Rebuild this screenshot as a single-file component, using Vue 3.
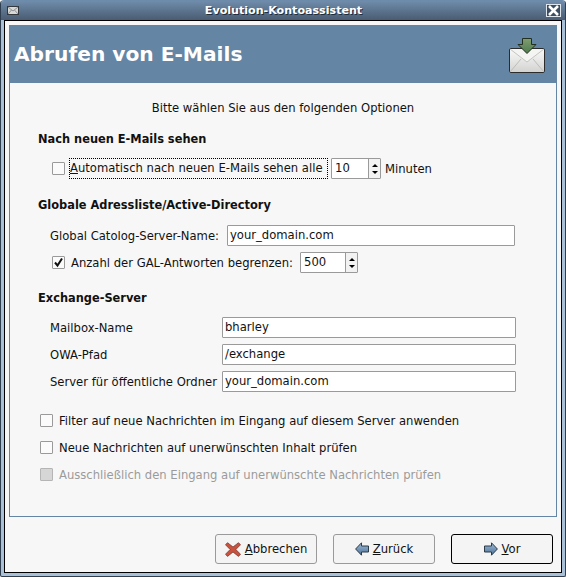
<template>
  <div class="window">
    <!-- Titelleiste -->
    <div class="titlebar">
      <svg class="tb-icon" width="12" height="9" viewBox="0 0 12 9">
        <rect x="0.5" y="0.5" width="11" height="8" fill="#d8d8d4" stroke="#33383e"/>
        <path d="M1 1l5 4 5-4M1 8l3.500-4M11 8L7.500 4" fill="none" stroke="#8d9296"/>
      </svg>
      <span class="tb-title">Evolution-Kontoassistent</span>
      <div class="tb-close">
        <svg width="13" height="11" viewBox="0 0 13 11">
          <path d="M2 1l9 9M11 1l-9 9" stroke="#fff" stroke-width="2.600" fill="none"/>
        </svg>
      </div>
    </div>

    <div class="client">
      <div class="page">
        <div class="banner">
          <h1>Abrufen von E-Mails</h1>
          <svg class="banner-icon" width="38" height="37" viewBox="0 0 38 37">
            <defs>
              <linearGradient id="env" x1="0" y1="0" x2="0" y2="1">
                <stop offset="0" stop-color="#fafafa"/>
                <stop offset="1" stop-color="#d2d2d0"/>
              </linearGradient>
              <linearGradient id="arrow" x1="0" y1="0" x2="0" y2="1">
                <stop offset="0" stop-color="#7f9e72"/>
                <stop offset="1" stop-color="#4f7a4c"/>
              </linearGradient>
            </defs>
            <rect x="1.500" y="11.500" width="35" height="24" rx="1.500" fill="url(#env)" stroke="#2c2c2c"/>
            <path d="M2 12l17 13 17-13" fill="#f4f4f2" stroke="#c4c4c0"/>
            <path d="M2 35l11-13M36 35L25 22" fill="none" stroke="#bdbdb9"/>
            <path d="M14.500 1.500h9v6h4.500L19 16.500 10 7.500h4.500z" fill="url(#arrow)" stroke="#24301f"/>
          </svg>
        </div>

        <div class="body">
          <p class="intro">Bitte wählen Sie aus den folgenden Optionen</p>

          <section class="group first">
            <h2>Nach neuen E-Mails sehen</h2>
            <div class="auto-row">
              <span class="check"></span>
              <span class="focus-label"><u>A</u>utomatisch nach neuen E-Mails sehen alle</span>
              <div class="spin spin-minutes">
                <span class="spin-value">10</span>
                <div class="spin-btns"><i class="up"></i><i class="down"></i></div>
              </div>
              <span>Minuten</span>
            </div>
          </section>

          <section class="group">
            <h2>Globale Adressliste/Active-Directory</h2>
            <div class="gal-row">
              <span>Global Catolog-Server-Name:</span>
              <div class="entry gal-entry">your_domain.com</div>
            </div>
            <div class="gal-limit">
              <span class="check">
                <svg width="11" height="11" viewBox="0 0 11 11">
                  <path d="M2 5.500l2.500 3L9 1.500" fill="none" stroke="#111" stroke-width="2"/>
                </svg>
              </span>
              <span class="gal-text">Anzahl der GAL-Antworten begrenzen:</span>
              <div class="spin spin-gal">
                <span class="spin-value">500</span>
                <div class="spin-btns"><i class="up"></i><i class="down"></i></div>
              </div>
            </div>
          </section>

          <section class="group third">
            <h2>Exchange-Server</h2>
            <div class="ex-grid">
              <template v-for="f in exchange" :key="f.label">
                <span>{{ f.label }}</span>
                <div class="entry">{{ f.value }}</div>
              </template>
            </div>
          </section>

          <div class="options">
            <div v-for="o in options" :key="o.text" class="opt" :class="{ off: o.off }">
              <span class="check"></span>
              <span>{{ o.text }}</span>
            </div>
          </div>
        </div>
      </div>

      <!-- Buttons -->
      <div class="actions">
        <button class="btn">
          <svg width="16" height="15" viewBox="0 0 16 15">
            <path d="M2.500.7L8 5 13.500.7 15.500 2.800 10.800 7.500l4.700 4.700-2 2.200L8 10 2.500 14.400.5 12.200l4.700-4.700L.5 2.800z" fill="#c9523f" stroke="#7b3a30" stroke-width="0.800"/>
          </svg>
          <span><u>A</u>bbrechen</span>
        </button>
        <button class="btn">
          <svg width="14" height="14" viewBox="0 0 14 14">
            <path d="M6.500.8L.6 7l5.900 6.200V10h7V4h-7z" fill="url(#nav)" stroke="#2b3a48"/>
            <defs>
              <linearGradient id="nav" x1="0" y1="0" x2="0" y2="1">
                <stop offset="0" stop-color="#9bbbd8"/>
                <stop offset="1" stop-color="#4f7196"/>
              </linearGradient>
            </defs>
          </svg>
          <span><u>Z</u>urück</span>
        </button>
        <button class="btn default">
          <svg width="14" height="14" viewBox="0 0 14 14">
            <path d="M7.500.8L13.400 7l-5.900 6.200V10h-7V4h7z" fill="url(#nav)" stroke="#2b3a48"/>
          </svg>
          <span><u>V</u>or</span>
        </button>
      </div>
    </div>
  </div>
</template>

<script setup>
const exchange = [
  { label: 'Mailbox-Name', value: 'bharley' },
  { label: 'OWA-Pfad', value: '/exchange' },
  { label: 'Server für öffentliche Ordner', value: 'your_domain.com' },
]

const options = [
  { text: 'Filter auf neue Nachrichten im Eingang auf diesem Server anwenden' },
  { text: 'Neue Nachrichten auf unerwünschten Inhalt prüfen' },
  { text: 'Ausschließlich den Eingang auf unerwünschte Nachrichten prüfen', off: true },
]
</script>

<style>
html, body { margin: 0; background: #fff; }
</style>

<style scoped>
.window {
  width: 566px; height: 577px; box-sizing: border-box;
  display: flex; flex-direction: column;
  background: #a9c0d6;
  border: 1px solid #2f3f4f;
  border-top-color: #6d8cab;
  border-radius: 4px 4px 2px 2px;
  padding: 0 3px 3px;
  font-family: "DejaVu Sans", sans-serif;
  font-size: 11.6px;
  color: #111;
  overflow: hidden;
}

/* Titelleiste */
.titlebar {
  height: 19px; flex-shrink: 0; margin: 0 -3px;
  padding: 0 4px 0 6px;
  display: flex; align-items: center; justify-content: space-between;
  background: linear-gradient(#6f8cab, #4a5c72);
}
.tb-icon { flex-shrink: 0; }
.tb-title {
  font-weight: bold; color: #fff; font-size: 11.1px;
  text-shadow: 1px 1px 0 #222c38;
  margin-left: 2px;
}
.tb-close {
  width: 13px; height: 11px; border: 1px solid #dfe6ee;
  background: #3d4d61;
  box-sizing: content-box;
  display: flex;
}

.client {
  flex: 1; min-height: 0;
  display: flex; flex-direction: column;
  background: #f7f7f7;
  border: 1px solid #000;
  padding: 4px 4px 0 4px;
}

.page {
  height: 492px; box-sizing: border-box; flex-shrink: 0;
  border: 1px solid #6485a4;
  border-top: 0;
  display: flex; flex-direction: column;
}
.banner {
  height: 58px; flex-shrink: 0; margin: 0 -1px;
  background: #6485a4;
  display: flex; align-items: center; justify-content: space-between;
  padding: 0 11px 0 5px;
}
.banner h1 {
  margin: 0; color: #fff; font-size: 20.2px; font-weight: bold;
  line-height: 24px;
}
.banner-icon { margin-top: 2px; }

.body { padding: 0 0 0 28px; }
.intro {
  margin: 15px 28px 0 0; text-align: center; line-height: 20px;
}

.group { margin-top: 16px; }
.group.first { margin-top: 11px; }
.group.third { margin-top: 15px; }
h2 { margin: 0; font-size: 11.4px; font-weight: bold; line-height: 20px; }

.check {
  width: 11px; height: 11px; flex-shrink: 0;
  background: #fbfbfb; border: 1px solid #9a9a9a; border-radius: 1px;
  display: flex; align-items: center; justify-content: center;
}

.auto-row {
  margin-top: 9px; padding-left: 14px;
  display: flex; align-items: center; height: 21px;
}
.focus-label {
  margin-left: 5px; padding: 0 1px 0 0; width: 256px; white-space: nowrap;
  outline: 1px dotted #000; outline-offset: 0;
  line-height: 19px;
}
.spin {
  height: 21px; box-sizing: border-box; flex-shrink: 0;
  display: flex; align-items: stretch;
  background: #fff;
  border: 1px solid #9a9a9a; border-radius: 1px;
}
.spin-value { flex: 1; padding-left: 3px; line-height: 19px; }
.spin-btns {
  width: 11px; background: #f2f2f2; border-left: 1px solid #9a9a9a;
  display: flex; flex-direction: column; align-items: center; justify-content: center; gap: 4px;
}
.spin-btns i { width: 0; height: 0; border: 3px solid transparent; }
.spin-btns i.up { border-top: 0; border-bottom: 3px solid #000; }
.spin-btns i.down { border-bottom: 0; border-top: 3px solid #000; }
.spin-minutes { width: 50px; margin: 0 4px 0 4px; }
.spin-gal { width: 58px; }

.entry {
  height: 21px; box-sizing: border-box;
  background: #fff; border: 1px solid #9a9a9a; border-radius: 1px;
  padding-left: 2px; line-height: 19px;
}
.gal-row {
  margin-top: 10px; padding-left: 12px;
  display: flex; align-items: center;
}
.gal-entry { width: 288px; margin-left: auto; margin-right: 41px; }
.gal-limit {
  margin-top: 6px; padding-left: 14px; height: 21px;
  display: flex; align-items: center; gap: 6px;
}
.gal-text { width: 223px; white-space: nowrap; }

.ex-grid {
  margin-top: 9px; padding-left: 12px;
  display: grid; grid-template-columns: 172px 294px; row-gap: 6px; align-items: center;
}

.options { margin-top: 22px; padding-left: 2px; display: flex; flex-direction: column; gap: 14px; }
.opt { display: flex; align-items: center; gap: 6px; height: 13px; }
.opt.off { color: #9b9b9b; }
.opt.off .check { background: #d6d6d6; border-color: #b5b5b5; }

/* Buttons */
.actions {
  flex: 1;
  display: flex; justify-content: flex-end; align-items: flex-start; gap: 16px;
  padding: 17px 4px 0 0;
}
.btn {
  width: 102px; height: 30px; padding: 0;
  display: flex; align-items: center; justify-content: center; gap: 4px;
  background: #f4f4f4;
  border: 1px solid #9a9a9a; border-radius: 3px;
  font: inherit; color: inherit;
}
.btn.default { border-color: #000; }
</style>
